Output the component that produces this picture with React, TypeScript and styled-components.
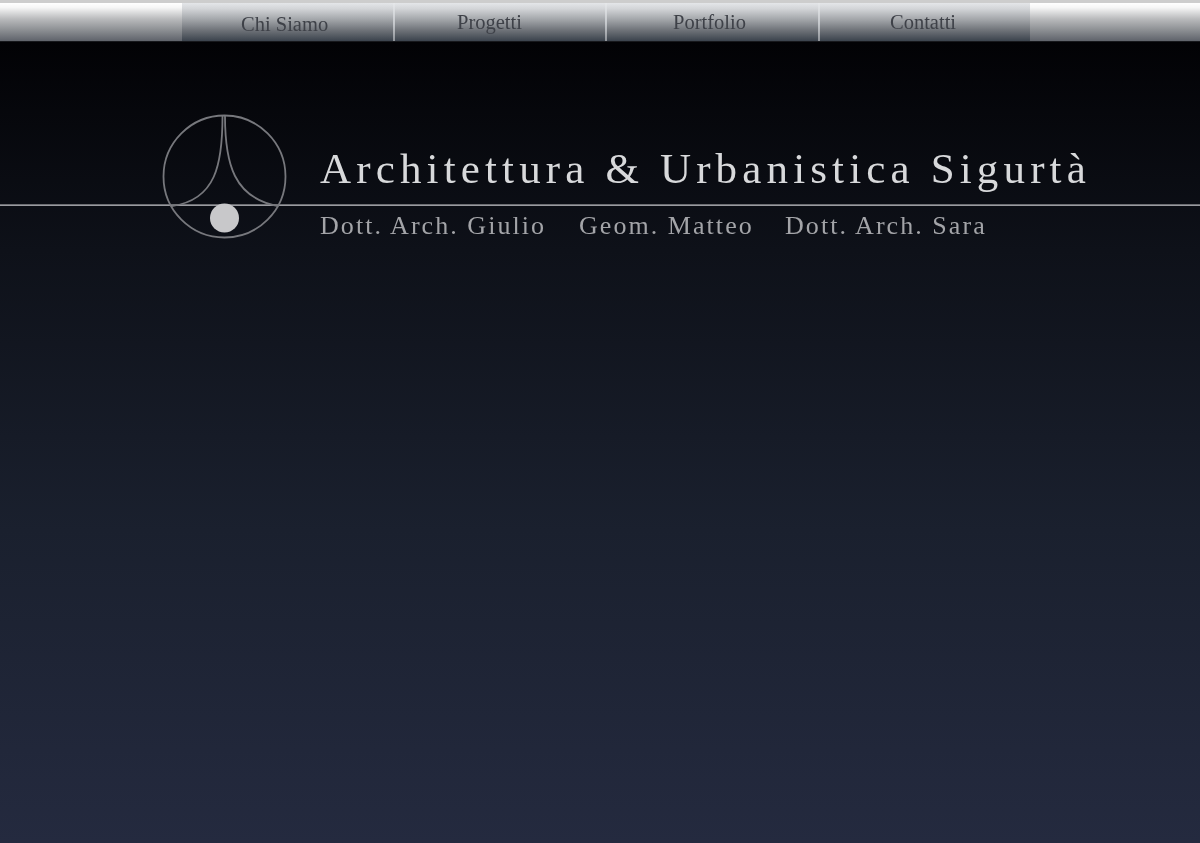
import React from "react";
import styled, { createGlobalStyle } from "styled-components";

const Global = createGlobalStyle`
  html, body { margin: 0; padding: 0; background: #000; }
  #root { width: 100%; }
`;

const Page = styled.div`
  width: 100%;
  height: 843px;
  overflow: hidden;
  display: flex;
  flex-direction: column;
  background: linear-gradient(180deg, #020205 42px, #0e1119 250px, #1a202e 530px, #242a3f 843px);
  font-family: "Liberation Serif", "Times New Roman", serif;
`;

const TopBar = styled.nav`
  box-sizing: border-box;
  height: 42px;
  flex: none;
  display: flex;
  padding-left: 182px;
  border-top: 3px solid #cdcdcd;
  border-bottom: 1px solid #17181c;
  background: linear-gradient(180deg, #ffffff 0%, #f6f6f6 12%, #b9babc 42%, #8b8e92 72%, #5f636b 100%);
`;

const NavItem = styled.a<{ $w: number; $x: number; $up: number }>`
  box-sizing: border-box;
  width: ${(p) => p.$w}px;
  height: 100%;
  padding-left: ${(p) => p.$x}px;
  padding-top: ${(p) => 4 - p.$up}px;
  display: flex;
  align-items: center;
  font-size: 20.5px;
  color: #3e4148;
  border-right: 2px solid;
  border-image: linear-gradient(180deg, #e8eaec, #c4c7cb 55%, #8d9197) 1;
  background: linear-gradient(180deg, #e4e6e9 0%, #d3d5d8 15%, #a0a3a7 45%, #6e7278 72%, #3b434d 100%);
  &:last-child { border-right: 0; }
  span { filter: blur(0.7px); }
`;

const Header = styled.header`
  position: relative;
  display: flex;
  align-items: flex-start;
  gap: 32px;
  padding: 72px 0 0 162px;
  &::before {
    content: "";
    position: absolute;
    left: 0;
    right: 0;
    top: 162px;
    height: 2px;
    background: linear-gradient(180deg, #6c6d72 50%, #9a9ba0 50%);
  }
`;

const Logo = styled.svg`
  position: relative;
  flex: none;
  width: 126px;
  height: 126px;
`;

const Titles = styled.div`
  position: relative;
  display: flex;
  flex-direction: column;
  padding-top: 32px;
`;

const Title = styled.h1`
  margin: 0;
  font-size: 43px;
  line-height: 46px;
  font-weight: 400;
  letter-spacing: 5.15px;
  word-spacing: 0px;
  white-space: nowrap;
  color: #d8d9db;
  filter: blur(0.5px);
`;

const Names = styled.div`
  display: flex;
  margin-top: 20px;
`;

const Name = styled.span<{ $w: number }>`
  width: ${(p) => p.$w}px;
  flex: none;
  font-size: 26px;
  line-height: 28px;
  letter-spacing: 2.05px;
  white-space: nowrap;
  color: #a3a4a8;
  filter: blur(0.6px);
`;

export default function App() {
  return (
    <Page>
      <Global />
      <TopBar>
        <NavItem $w={213} $x={59} $up={0}><span>Chi Siamo</span></NavItem>
        <NavItem $w={212} $x={62} $up={3}><span>Progetti</span></NavItem>
        <NavItem $w={213} $x={66} $up={5}><span>Portfolio</span></NavItem>
        <NavItem $w={210} $x={70} $up={3}><span>Contatti</span></NavItem>
      </TopBar>
      <Header>
        <Logo viewBox="0 0 126 126" fill="none" aria-hidden="true">
          <circle cx="62.5" cy="62.5" r="61" stroke="#77787d" strokeWidth="1.8" />
          <path d="M60.5 2 C60.5 50 54 86 10 92" stroke="#77787d" strokeWidth="1.8" />
          <path d="M63 2 C63 50 72 84 116 92" stroke="#77787d" strokeWidth="1.8" />
          <circle cx="62.5" cy="104" r="14.5" fill="#c8c8ca" />
        </Logo>
        <Titles>
          <Title>Architettura &amp; Urbanistica Sigurtà</Title>
          <Names>
            <Name $w={259}>Dott. Arch. Giulio</Name>
            <Name $w={206}>Geom. Matteo</Name>
            <Name $w={210}>Dott. Arch. Sara</Name>
          </Names>
        </Titles>
      </Header>
    </Page>
  );
}
